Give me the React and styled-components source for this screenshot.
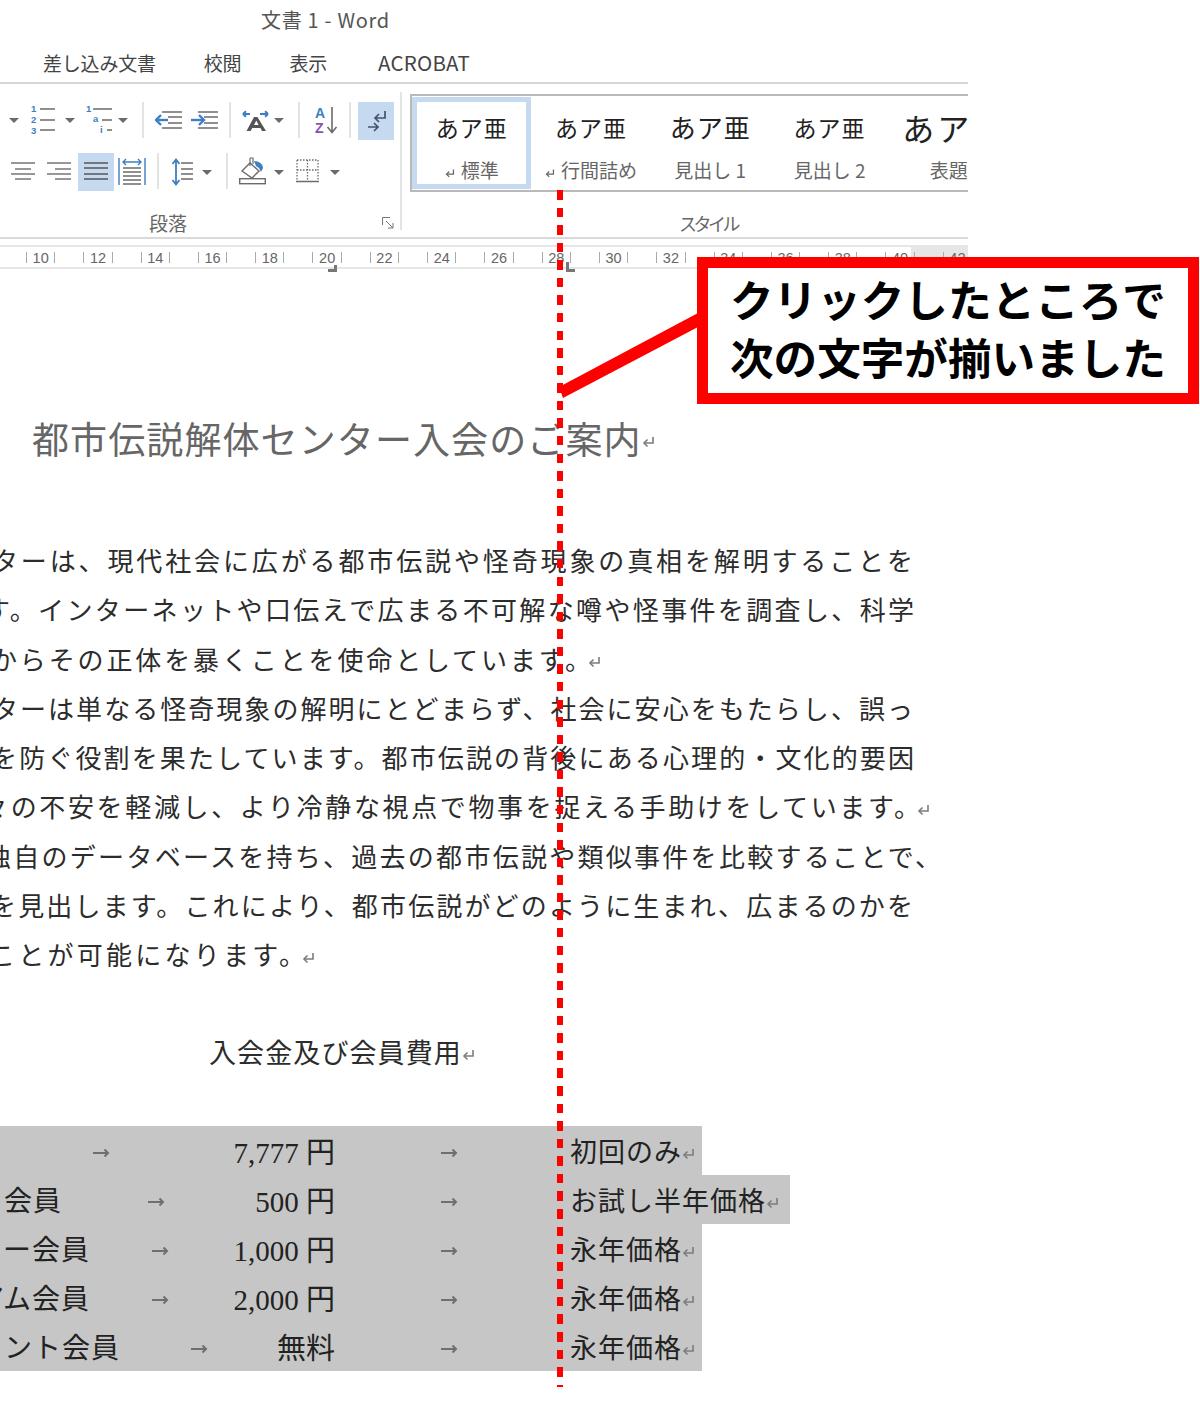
import React from 'react';
import styled, { createGlobalStyle } from 'styled-components';

const JP = '"Noto Sans CJK JP", "Noto Sans", sans-serif';
const MINCHO = '"Liberation Serif", "Noto Sans CJK JP", serif';
const GREY = '#6b6b6b';
const BLUE = '#3d7fc1';

const tabs = ['差し込み文書', '校閲', '表示'];
const rulerMarks = [10, 12, 14, 16, 18, 20, 22, 24, 26, 28, 30, 32, 34, 36, 38, 40, 42];

const styleItems = [
  { sample: 'あア亜', size: 23, track: 1, lead: 0, label: '標準', mark: true, active: true },
  { sample: 'あア亜', size: 23, track: 1, lead: 0, label: '行間詰め', mark: true },
  { sample: 'あア亜', size: 26, track: 1, lead: 0, label: '見出し 1' },
  { sample: 'あア亜', size: 23, track: 1, lead: 0, label: '見出し 2' },
  { sample: 'あア亜', size: 32, track: 3, lead: 12, label: '表題' },
];

const bodyLines = [
  { text: 'ターは、現代社会に広がる都市伝説や怪奇現象の真相を解明することを', left: -8, width: 921 },
  { text: 'す。インターネットや口伝えで広まる不可解な噂や怪事件を調査し、科学', left: -16, width: 930 },
  { text: 'からその正体を暴くことを使命としています。', left: -9, width: 600, mark: true },
  { text: 'ターは単なる怪奇現象の解明にとどまらず、社会に安心をもたらし、誤っ', left: -8, width: 921 },
  { text: 'を防ぐ役割を果たしています。都市伝説の背後にある心理的・文化的要因', left: -9, width: 923 },
  { text: '々の不安を軽減し、より冷静な視点で物事を捉える手助けをしています。', left: -18, width: 938, mark: true },
  { text: '独自のデータベースを持ち、過去の都市伝説や類似事件を比較することで、', left: -15, width: 956 },
  { text: 'を見出します。これにより、都市伝説がどのように生まれ、広まるのかを', left: -10, width: 923 },
  { text: 'ことが可能になります。', left: -11, width: 316, mark: true },
];

const feeRows = [
  { label: '', end: 0, tab: 93, amount: '7,777 円', note: '初回のみ', width: 702 },
  { label: 'ト会員', end: 62, tab: 148, amount: '500 円', note: 'お試し半年価格', width: 790 },
  { label: 'ター会員', end: 90, tab: 152, amount: '1,000 円', note: '永年価格', width: 702 },
  { label: 'アム会員', end: 90, tab: 152, amount: '2,000 円', note: '永年価格', width: 702 },
  { label: 'ント会員', end: 120, tab: 191, amount: '無料', note: '永年価格', width: 702 },
];

const ReturnMark = ({ size = 13, color = '#7c7c7c' }) => (
  <MarkSvg viewBox="0 0 13 13" width={size} height={size} fill="none" stroke={color} strokeWidth="1.6">
    <path d="M11 2v6H2" />
    <path d="M5.5 4.5 2 8l3.5 3.5" />
  </MarkSvg>
);

const TabArrow = () => (
  <ArrowSvg viewBox="0 0 17 10" width="17" height="10" fill="none" stroke="#6f6f6f" strokeWidth="2">
    <path d="M0 5h15" />
    <path d="M11.500 1.500 15 5l-3.500 3.500" />
  </ArrowSvg>
);

const Caret = ({ y = 18 }) => (
  <svg viewBox="0 0 10 38" width="10" height="38">
    <path d={`M0 ${y - 2}h10l-5 5z`} fill={GREY} />
  </svg>
);

const Lines = ({ rows, w, stroke = GREY, sw = 1.4 }) => (
  <svg viewBox={`0 0 ${w} 38`} width={w} height="38" stroke={stroke} strokeWidth={sw}>
    {rows.map(([x1, x2, y]) => <path key={`${x1}-${y}`} d={`M${x1} ${y}H${x2}`} />)}
  </svg>
);

const Numbered = () => (
  <svg viewBox="0 0 26 38" width="26" height="38">
    <g stroke={GREY} strokeWidth="1.4">
      <path d="M10 7h15M10 18h15M10 28h15" />
    </g>
    <g fill={BLUE} fontSize="9.500" fontWeight="700" fontFamily="Liberation Sans, sans-serif">
      <text x="1" y="10">1</text>
      <text x="1" y="21">2</text>
      <text x="1" y="32">3</text>
    </g>
  </svg>
);

const Multilevel = () => (
  <svg viewBox="0 0 27 38" width="27" height="38">
    <g stroke={GREY} strokeWidth="1.4">
      <path d="M8 7h19M17 18h10M22 28h5" />
    </g>
    <g fill={BLUE} fontSize="9.500" fontWeight="700" fontFamily="Liberation Sans, sans-serif">
      <text x="1" y="10">1</text>
      <text x="8" y="20">a</text>
      <text x="15" y="31">i</text>
    </g>
  </svg>
);

const Indent = ({ flip }) => (
  <svg viewBox="0 0 27 38" width="27" height="38">
    <g stroke={GREY} strokeWidth="1.4">
      <path d="M7 10h20M13 15h14M13 21h14M7 26h20" />
    </g>
    <g stroke={BLUE} strokeWidth="2.4" fill="none">
      {flip ? (
        <>
          <path d="M0 18h12" />
          <path d="M8 13l5 5-5 5" />
        </>
      ) : (
        <>
          <path d="M2 18h11" />
          <path d="M6 13l-5 5 5 5" />
        </>
      )}
    </g>
  </svg>
);

const Phonetic = () => (
  <svg viewBox="0 0 27 38" width="27" height="38">
    <path d="M12 15h3.400L24 29h-4l-1.600-3h-8.200L8.600 29H4.500zM12 23h4.600l-2.300-4.400z" fill="#555" />
    <path d="M1 12h7M1 12l3-2.800M1 12l3 2.800" stroke={BLUE} strokeWidth="2" fill="none" />
    <path d="M18 12h8M26 12l-3-2.800M26 12l-3 2.800" stroke={BLUE} strokeWidth="2" fill="none" />
  </svg>
);

const SortAZ = () => (
  <svg viewBox="0 0 24 38" width="24" height="38">
    <text x="1" y="16" fontSize="14" fontWeight="700" fill={BLUE} fontFamily="Liberation Sans, sans-serif">A</text>
    <text x="1" y="31" fontSize="14" fontWeight="700" fill="#8a4fb3" fontFamily="Liberation Sans, sans-serif">Z</text>
    <path d="M18 5v25M13.500 25l4.500 5.500 4.500-5.500" stroke={GREY} strokeWidth="1.6" fill="none" />
  </svg>
);

const Pilcrow = () => (
  <svg viewBox="0 0 36 38" width="36" height="38" fill="none" strokeWidth="1.7">
    <path d="M27 9v7H17M21 12l-4 4 4 4" stroke="#44546a" />
    <path d="M10 25h10M16 21l4 4-4 4" stroke="#44546a" />
  </svg>
);

const Distributed = () => (
  <svg viewBox="0 0 28 38" width="28" height="38">
    <path d="M1 5v27M27 5v27M5 9h18M8 6l-3 3 3 3M20 6l3 3-3 3" stroke={BLUE} strokeWidth="1.4" fill="none" />
    <path d="M5 15h18M5 19h18M5 23h18M5 27h18M5 31h18" stroke={GREY} strokeWidth="1.4" />
  </svg>
);

const LineSpacing = () => (
  <svg viewBox="0 0 22 38" width="22" height="38" fill="none">
    <path d="M5 7v24M1.500 11 5 6.500 8.500 11M1.500 27 5 31.500 8.500 27" stroke={BLUE} strokeWidth="1.8" />
    <path d="M10 10h12M10 16h12M10 21h12M10 26h12" stroke={GREY} strokeWidth="1.4" />
  </svg>
);

const Shading = () => (
  <svg viewBox="0 0 27 38" width="27" height="38" fill="none">
    <path d="M3 18 11 10l9 8-7 7z" stroke={GREY} strokeWidth="1.4" />
    <path d="M11 5v8M11 5h3v6" stroke={GREY} strokeWidth="1.2" />
    <path d="M15 8c5 0 9 3 9 7l-2 4-2-4-3-2z" fill={BLUE} />
    <rect x="0.700" y="25.700" width="25.600" height="5" stroke={GREY} strokeWidth="1.4" />
  </svg>
);

const Borders = () => (
  <svg viewBox="0 0 23 38" width="23" height="38" fill="none">
    <path d="M1 7h21M1 17h21M1 7v20M11.500 7v20M22 7v20" stroke={GREY} strokeWidth="1.3" strokeDasharray="1.500 1.500" />
    <path d="M0 28.500h23" stroke={GREY} strokeWidth="1.500" />
  </svg>
);

const App = () => (
  <Page>
    <GlobalStyle />
    <Chrome>
      <TitleBar>文書 1 - Word</TitleBar>
      <TabBar>
        {tabs.map(tab => <Tab key={tab}>{tab}</Tab>)}
        <LatinTab>ACROBAT</LatinTab>
      </TabBar>
      <Ribbon>
        <ParagraphGroup>
          <ToolRow>
            <Tool $gap={9}><Caret /></Tool>
            <Tool $gap={11}><Numbered /></Tool>
            <Tool $gap={9}><Caret /></Tool>
            <Tool $gap={10}><Multilevel /></Tool>
            <Tool $gap={6}><Caret /></Tool>
            <ToolSep $gap={14} />
            <Tool $gap={11}><Indent /></Tool>
            <Tool $gap={9}><Indent flip /></Tool>
            <ToolSep $gap={11} />
            <Tool $gap={11}><Phonetic /></Tool>
            <Tool $gap={5}><Caret /></Tool>
            <ToolSep $gap={14} />
            <Tool $gap={14}><SortAZ /></Tool>
            <ToolSep $gap={11} />
            <Tool $gap={7} $on><Pilcrow /></Tool>
          </ToolRow>
          <ToolRow>
            <Tool $gap={11}><Lines w={24} rows={[[0, 24, 10], [4, 20, 16], [0, 24, 21], [4, 20, 26]]} /></Tool>
            <Tool $gap={12}><Lines w={24} rows={[[0, 24, 10], [8, 24, 16], [0, 24, 21], [8, 24, 26]]} /></Tool>
            <Tool $gap={7} $on><Lines w={36} sw={1.8} rows={[[6, 30, 10], [6, 30, 15], [6, 30, 21], [6, 30, 26]]} /></Tool>
            <Tool $gap={4}><Distributed /></Tool>
            <ToolSep $gap={11} />
            <Tool $gap={12}><LineSpacing /></Tool>
            <Tool $gap={9}><Caret y={19} /></Tool>
            <ToolSep $gap={14} />
            <Tool $gap={11}><Shading /></Tool>
            <Tool $gap={8}><Caret y={19} /></Tool>
            <Tool $gap={12}><Borders /></Tool>
            <Tool $gap={11}><Caret y={19} /></Tool>
          </ToolRow>
          <GroupFoot>
            <GroupLabel>段落</GroupLabel>
            <svg viewBox="0 0 12 12" width="12" height="12" fill="none" stroke="#777">
              <path d="M.5 8V.5H8" />
              <path d="M4 4l7 7M11 6v5H6" />
            </svg>
          </GroupFoot>
        </ParagraphGroup>
        <GroupDivider />
        <StyleGroup>
          <Gallery>
            {styleItems.map(item => (
              <StyleItem key={item.label} $active={item.active}>
                <StyleSample $size={item.size} $track={item.track} $lead={item.lead}>{item.sample}</StyleSample>
                <StyleName>
                  {item.mark && <ReturnMark size={10} color="#666" />}
                  {item.label}
                </StyleName>
              </StyleItem>
            ))}
          </Gallery>
          <StyleLabel>スタイル</StyleLabel>
        </StyleGroup>
      </Ribbon>
      <Ruler>
        <RulerTrack>
          {rulerMarks.map(n => (
            <RulerCell key={n}>
              <RulerTick />
              {n}
              <RulerTick />
            </RulerCell>
          ))}
        </RulerTrack>
        <IndentMarker />
        <TabMarker />
      </Ruler>
    </Chrome>

    <Sheet>
      <DocTitle>
        都市伝説解体センター入会のご案内
        <ReturnMark />
      </DocTitle>
      <Body>
        {bodyLines.map(line => (
          <Line key={line.text} $left={line.left}>
            <LineText $width={line.width}>{line.text}</LineText>
            {line.mark && <LineMark><ReturnMark /></LineMark>}
          </Line>
        ))}
      </Body>
      <SubTitle>
        入会金及び会員費用
        <ReturnMark />
      </SubTitle>
      <FeeTable>
        {feeRows.map(row => (
          <FeeRow key={row.tab + row.amount} $width={row.width}>
            <FeeName>
              <FeeLabel $end={row.end}>{row.label}</FeeLabel>
              <FeeTab $gap={row.tab - row.end}><TabArrow /></FeeTab>
            </FeeName>
            <FeeAmount>{row.amount}</FeeAmount>
            <FeeTab $gap={106}><TabArrow /></FeeTab>
            <FeeNote>
              {row.note}
              <ReturnMark />
            </FeeNote>
          </FeeRow>
        ))}
      </FeeTable>
    </Sheet>

    <DottedGuide />
    <Leader viewBox="0 0 140 85" width="140" height="85">
      <polygon points="139,4 139,18 4,89 0,78" fill="#ff0000" />
    </Leader>
    <Callout>
      クリックしたところで
      <br />
      次の文字が揃いました
    </Callout>
  </Page>
);

const GlobalStyle = createGlobalStyle`
  html, body {
    margin: 0;
    padding: 0;
    background: #fff;
  }
`;

const Page = styled.div`
  position: relative;
  width: 1200px;
  height: 1404px;
  overflow: hidden;
  background: #fff;
  font-family: ${JP};
`;

const Chrome = styled.div`
  width: 968px;
`;

const TitleBar = styled.div`
  height: 41px;
  padding-left: 261px;
  font-size: 20px;
  line-height: 39px;
  letter-spacing: 0.7px;
  color: #555;
`;

const TabBar = styled.div`
  display: flex;
  gap: 48px;
  height: 41px;
  padding-left: 43px;
  border-bottom: 2px solid #d6d6d6;
`;

const Tab = styled.div`
  font-size: 19px;
  line-height: 43px;
  letter-spacing: -0.2px;
  color: #444;
`;

const LatinTab = styled(Tab)`
  margin-left: 3px;
  font-size: 20.5px;
  letter-spacing: 0.2px;
`;

const Ribbon = styled.div`
  display: flex;
  height: 153px;
  border-bottom: 2px solid #d9d9d9;
`;

const ParagraphGroup = styled.div`
  display: flex;
  flex-direction: column;
  gap: 13px;
  flex: none;
  width: 400px;
  padding-top: 18px;
`;

const ToolRow = styled.div`
  display: flex;
  height: 38px;
`;

const Tool = styled.div`
  display: flex;
  flex: none;
  height: 38px;
  margin-left: ${props => props.$gap}px;
  background: ${props => (props.$on ? '#c5d9f1' : 'transparent')};
`;

const ToolSep = styled.div`
  flex: none;
  width: 2px;
  height: 36px;
  margin-left: ${props => props.$gap}px;
  background: #e3e3e3;
`;

const GroupFoot = styled.div`
  display: flex;
  align-items: center;
  gap: 46px;
  margin-top: 6px;
`;

const GroupLabel = styled.div`
  width: 336px;
  font-size: 19px;
  line-height: 26px;
  text-align: center;
  color: #666;
`;

const GroupDivider = styled.div`
  flex: none;
  width: 2px;
  height: 138px;
  margin-top: 8px;
  background: #e3e3e3;
`;

const StyleGroup = styled.div`
  flex: 1;
  min-width: 0;
  margin-left: 8px;
  padding-top: 10px;
`;

const Gallery = styled.div`
  display: flex;
  height: 92px;
  padding: 1px 0;
  overflow: hidden;
  border: 2px solid #b9b9b9;
  border-right: 0;
`;

const StyleItem = styled.div`
  display: flex;
  flex-direction: column;
  align-items: center;
  flex: none;
  box-sizing: border-box;
  width: 119.3px;
  height: 92px;
  border: 5px solid ${props => (props.$active ? '#c5d9f1' : 'transparent')};
`;

const StyleSample = styled.div`
  height: 50px;
  padding-left: ${props => props.$lead}px;
  font-size: ${props => props.$size}px;
  line-height: 50px;
  letter-spacing: ${props => props.$track}px;
  white-space: nowrap;
  color: #222;
`;

const StyleName = styled.div`
  display: flex;
  align-items: center;
  gap: 6px;
  margin-top: 4px;
  font-size: 19px;
  line-height: 28px;
  white-space: nowrap;
  color: #666;
`;

const StyleLabel = styled.div`
  margin-top: 18px;
  padding-left: 38px;
  font-size: 18px;
  line-height: 26px;
  letter-spacing: -3.5px;
  text-align: center;
  color: #666;
`;

const Ruler = styled.div`
  position: relative;
  box-sizing: border-box;
  height: 24px;
  margin-top: 6px;
  border-top: 2px solid #e6e6e6;
  border-bottom: 2px solid #e6e6e6;
  background: linear-gradient(to right, #fff 911px, #e6e6e6 911px);
`;

const RulerTrack = styled.div`
  display: flex;
  height: 100%;
  padding: 1px 0 0 12px;
  overflow: hidden;
  box-sizing: border-box;
`;

const RulerCell = styled.div`
  display: flex;
  align-items: center;
  justify-content: space-between;
  flex: none;
  box-sizing: border-box;
  width: 57.3px;
  padding: 0 14px;
  font-family: "Liberation Sans", sans-serif;
  font-size: 14.5px;
  color: #666;
`;

const RulerTick = styled.span`
  width: 1px;
  height: 11px;
  background: #aaa;
`;

const IndentMarker = styled.div`
  position: absolute;
  left: 328px;
  bottom: -5px;
  width: 9px;
  height: 7px;
  border-right: 3px solid #777;
  border-bottom: 3px solid #777;
  box-sizing: border-box;
`;

const TabMarker = styled.div`
  position: absolute;
  left: 566px;
  bottom: -5px;
  width: 9px;
  height: 10px;
  border-left: 3px solid #777;
  border-bottom: 3px solid #777;
  box-sizing: border-box;
`;

const MarkSvg = styled.svg`
  flex: none;
  margin-top: 6px;
`;

const ArrowSvg = styled.svg`
  display: block;
  flex: none;
  margin-top: 6px;
`;

const Sheet = styled.div`
  width: 1200px;
`;

const DocTitle = styled.div`
  display: flex;
  align-items: center;
  height: 50px;
  margin-top: 144px;
  padding-left: 32px;
  font-size: 37px;
  letter-spacing: 1.1px;
  white-space: nowrap;
  color: #666;
`;

const Body = styled.div`
  margin-top: 72px;
`;

const Line = styled.div`
  display: flex;
  align-items: center;
  height: 49.3px;
  margin-left: ${props => props.$left}px;
`;

const LineText = styled.div`
  flex: none;
  width: ${props => props.$width}px;
  font-size: 26px;
  line-height: 49.3px;
  text-align-last: justify;
  color: #2c2c2c;
`;

const LineMark = styled.span`
  display: flex;
  margin-left: -3px;
`;

const SubTitle = styled.div`
  display: flex;
  align-items: center;
  height: 50px;
  margin-top: 48px;
  padding-left: 209px;
  font-size: 27px;
  letter-spacing: 1.1px;
  white-space: nowrap;
  color: #2c2c2c;
`;

const FeeTable = styled.div`
  margin-top: 49px;
`;

const FeeRow = styled.div`
  display: flex;
  align-items: center;
  width: ${props => props.$width}px;
  height: 49px;
  background: #c6c6c6;
  font-size: 27px;
  color: #222;
  white-space: nowrap;
`;

const FeeName = styled.div`
  display: flex;
  align-items: center;
  flex: none;
  width: 225px;
`;

const FeeLabel = styled.div`
  display: flex;
  justify-content: flex-end;
  flex: none;
  width: ${props => props.$end}px;
  font-size: 28px;
  letter-spacing: 1px;
`;

const FeeTab = styled.div`
  flex: none;
  margin-left: ${props => props.$gap}px;
`;

const FeeAmount = styled.div`
  flex: none;
  width: 110px;
  font-family: ${MINCHO};
  font-size: 29px;
  text-align: right;
`;

const FeeNote = styled.div`
  display: flex;
  align-items: center;
  flex: none;
  margin-left: 112px;
  letter-spacing: 1px;
`;

const DottedGuide = styled.div`
  position: absolute;
  left: 557px;
  top: 190px;
  width: 6px;
  height: 1197px;
  background: repeating-linear-gradient(to bottom, #ff0000 0 9.500px, transparent 9.500px 17.570px);
`;

const Leader = styled.svg`
  position: absolute;
  left: 559px;
  top: 309px;
  overflow: visible;
`;

const Callout = styled.div`
  position: absolute;
  left: 697px;
  top: 257px;
  box-sizing: border-box;
  width: 502px;
  height: 147px;
  padding: 1px 0 0 22px;
  border: 11px solid #ff0000;
  background: #fff;
  font-size: 43.6px;
  font-weight: 700;
  line-height: 58px;
  white-space: nowrap;
  color: #000;
`;

export default App;
